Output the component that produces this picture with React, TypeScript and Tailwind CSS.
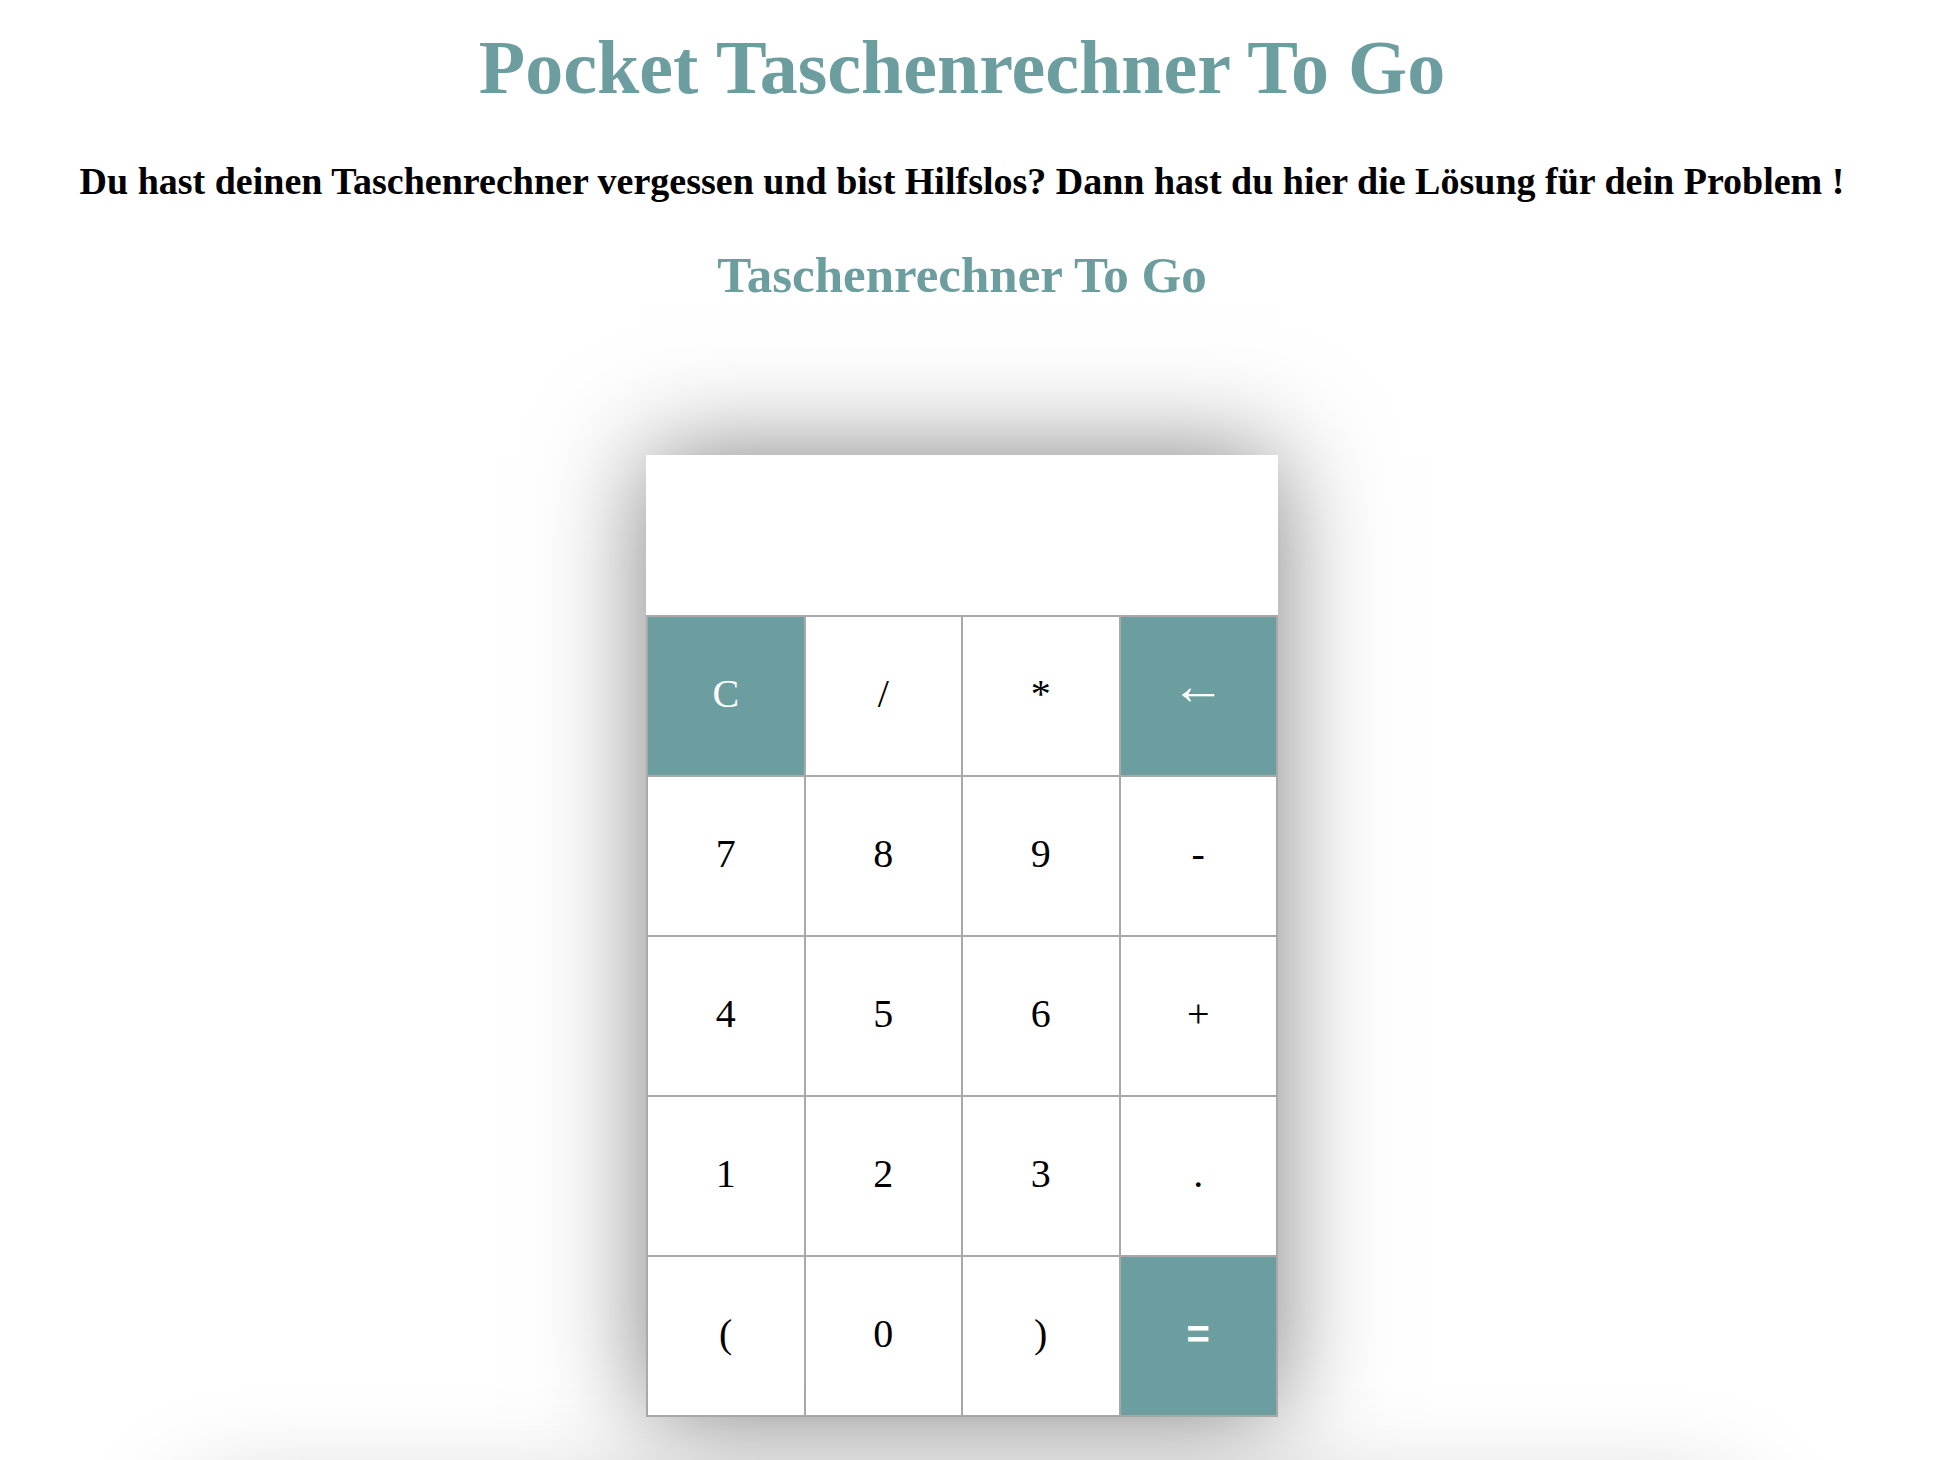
import { useState } from "react";

const keys = [
  "C", "/", "*", "←",
  "7", "8", "9", "-",
  "4", "5", "6", "+",
  "1", "2", "3", ".",
  "(", "0", ")", "=",
];

const accent = ["C", "←", "="];

export default function App() {
  const [value, setValue] = useState("");

  const press = (k: string) => {
    if (k === "C") return setValue("");
    if (k === "←") return setValue((v) => v.slice(0, -1));
    if (k === "=") {
      try {
        // only digits and operators can end up here
        const res = Function(`"use strict"; return (${value || 0})`)();
        setValue(String(res));
      } catch {
        setValue("Error");
      }
      return;
    }
    setValue((v) => (v === "Error" ? k : v + k));
  };

  return (
    <div className="min-h-screen bg-white pr-[14px] font-['Liberation_Serif','Times_New_Roman',serif] text-black overflow-hidden">
      <h1 className="mt-[23px] text-center text-[76px] leading-[88px] font-bold text-[#6d9e9f]">
        Pocket Taschenrechner To Go
      </h1>
      <h3 className="mt-[48px] text-center text-[38px] leading-[44px] font-bold">
        Du hast deinen Taschenrechner vergessen und bist Hilfslos? Dann hast du hier die Lösung für dein Problem !
      </h3>
      <h2 className="mt-[43px] text-center text-[51px] leading-[58px] font-bold text-[#6d9e9f]">
        Taschenrechner To Go
      </h2>

      {/* calculator */}
      <div className="mx-auto mt-[151px] w-[632px] shadow-[0_0_100px_rgba(0,0,0,0.5)]">
        <div className="h-[160px] bg-white flex items-end justify-end px-6 pb-4 text-[56px] overflow-hidden">
          {value}
        </div>
        <div className="grid grid-cols-4 gap-[2px] p-[2px] bg-[#a9a9a9]">
          {keys.map((k) => (
            <button
              key={k}
              onClick={() => press(k)}
              className={`h-[158px] flex items-center justify-center cursor-pointer ${
                k === "←" ? "text-[54px] pb-[20px]" : "text-[40px] pb-[4px]"
              } ${k === "=" ? "font-bold font-['Liberation_Sans',sans-serif]" : ""} ${
                accent.includes(k) ? "bg-[#6d9e9f] text-white" : "bg-white text-black"
              }`}
            >
              {k}
            </button>
          ))}
        </div>
      </div>

      {/* next section, only its shadow shows */}
      <div className="mx-auto mt-[84px] w-[1540px] h-[400px] bg-white shadow-[0_0_100px_rgba(0,0,0,0.25)]" />
    </div>
  );
}
